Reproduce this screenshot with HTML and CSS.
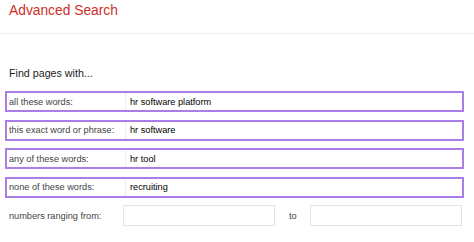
FILE: index.html
```html
<!DOCTYPE html>
<html lang="en">
<head>
  <meta charset="UTF-8">
  <title>Advanced Search</title>
  <link rel="stylesheet" href="styles.css">
</head>
<body>
  <div class="header">
    <h1 class="title">Advanced Search</h1>
  </div>

  <div class="content">
    <h2 class="section-title">Find pages with...</h2>

    <div class="rows">
      <div class="row highlight">
        <div class="label">all these words:</div>
        <div class="value">hr software platform</div>
      </div>
      <div class="row highlight">
        <div class="label">this exact word or phrase:</div>
        <div class="value">hr software</div>
      </div>
      <div class="row highlight">
        <div class="label">any of these words:</div>
        <div class="value">hr tool</div>
      </div>
      <div class="row highlight">
        <div class="label">none of these words:</div>
        <div class="value">recruiting</div>
      </div>
      <div class="row range">
        <div class="label">numbers ranging from:</div>
        <div class="field"></div>
        <div class="to">to</div>
        <div class="field"></div>
      </div>
    </div>
  </div>
</body>
</html>
```

FILE: styles.css
```css
/* === GENERAL === */
body {
  margin: 0;
  padding: 0;
  background-color: #fff;
  font-family: 'Liberation Sans', Arial, sans-serif;
  color: #222;
}

/* === HEADER === */
.header {
  height: 34px;
  padding: 3px 0 0 9px;
  box-sizing: border-box;
  border-bottom: 1px solid #f0f0f0;
}
.title {
  margin: 0;
  font-size: 13.8px;
  line-height: 16px;
  font-weight: normal;
  color: #cc2f2a;
}

/* === FORM === */
.content {
  padding: 33px 10px 0 5px;
}
.section-title {
  margin: 0 0 12px 4px;
  font-size: 10.7px;
  line-height: 12px;
  font-weight: normal;
  color: #222;
}
.rows {
  display: flex;
  flex-direction: column;
  gap: 7.5px;
}
.row {
  display: flex;
  align-items: stretch;
  height: 21px;
  box-sizing: border-box;
  font-size: 9.2px;
}
.row.highlight {
  border: 2px solid #a97fe6;
}
.label {
  width: 116px;
  padding-left: 2px;
  display: flex;
  align-items: center;
  color: #444;
  border-right: 1px solid #eee;
}
.row.range .label {
  width: 114px;
  padding-left: 4px;
  border-right: none;
}
.value {
  flex: 1;
  display: flex;
  align-items: center;
  padding-left: 4px;
  color: #000;
}
.field {
  width: 152px;
  border: 1px solid #e4e4e4;
  box-sizing: border-box;
}
.to {
  width: 35px;
  display: flex;
  align-items: center;
  padding-left: 14px;
  box-sizing: border-box;
  color: #444;
}
```
